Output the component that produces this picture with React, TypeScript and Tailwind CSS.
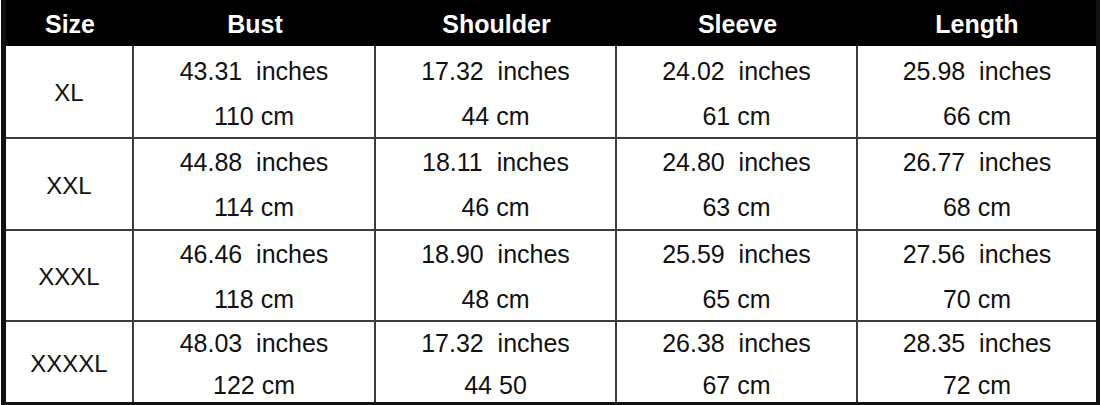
import React from "react";

type Row = {
  size: string;
  cells: [string, string][];
  h: string;
  pt: string;
  lead: string;
  last?: boolean;
};

const rows: Row[] = [
  {
    size: "XL",
    cells: [
      ["43.31  inches", "110 cm"],
      ["17.32  inches", "44 cm"],
      ["24.02  inches", "61 cm"],
      ["25.98  inches", "66 cm"],
    ],
    h: "h-[93px]",
    pt: "pt-[3px]",
    lead: "leading-[45px]",
  },
  {
    size: "XXL",
    cells: [
      ["44.88  inches", "114 cm"],
      ["18.11  inches", "46 cm"],
      ["24.80  inches", "63 cm"],
      ["26.77  inches", "68 cm"],
    ],
    h: "h-[92px]",
    pt: "pt-[1px]",
    lead: "leading-[45px]",
  },
  {
    size: "XXXL",
    cells: [
      ["46.46  inches", "118 cm"],
      ["18.90  inches", "48 cm"],
      ["25.59  inches", "65 cm"],
      ["27.56  inches", "70 cm"],
    ],
    h: "h-[91px]",
    pt: "pt-[1px]",
    lead: "leading-[45px]",
  },
  {
    size: "XXXXL",
    cells: [
      ["48.03  inches", "122 cm"],
      ["17.32  inches", "44 50"],
      ["26.38  inches", "67 cm"],
      ["28.35  inches", "72 cm"],
    ],
    h: "h-[80px]",
    pt: "pt-0",
    lead: "leading-[42px]",
    last: true,
  },
];

const headers = ["Size", "Bust", "Shoulder", "Sleeve", "Length"];
const widths = ["w-[128px]", "w-[242px]", "w-[241px]", "w-[241px]", "w-[238px]"];

export default function App() {
  return (
    <div
      className="w-[1100px] h-[405px] bg-white pl-[1px] overflow-hidden text-[#111]"
      style={{ fontFamily: '"Liberation Sans", Arial, sans-serif' }}
    >
      <div className="w-[1099px] h-[405px] border-l-[5px] border-r-[4px] border-b-[3px] border-[#111] bg-white flex flex-col">
        <div className="flex h-[46px] bg-black shrink-0 pt-[3px]">
          {headers.map((h, i) => (
            <div
              key={h}
              className={`${widths[i]} shrink-0 flex items-center justify-center text-white font-bold text-[25px]`}
            >
              {h}
            </div>
          ))}
        </div>
        {rows.map((r) => (
          <div key={r.size} className={`flex ${r.h} shrink-0 ${r.last ? "" : "border-b-2 border-[#3c3c3c]"}`}>
            <div className={`${widths[0]} shrink-0 border-r-2 border-[#3c3c3c] flex items-center justify-center text-[24px] pt-[3px]`}>
              {r.size}
            </div>
            {r.cells.map((c, i) => (
              <div
                key={i}
                className={`${widths[i + 1]} shrink-0 ${i < 3 ? "border-r-2 border-[#3c3c3c]" : ""} flex flex-col items-center ${r.pt} text-[25px] ${r.lead}`}
              >
                <div className="whitespace-pre">{c[0]}</div>
                <div className="whitespace-pre">{c[1]}</div>
              </div>
            ))}
          </div>
        ))}
      </div>
    </div>
  );
}
